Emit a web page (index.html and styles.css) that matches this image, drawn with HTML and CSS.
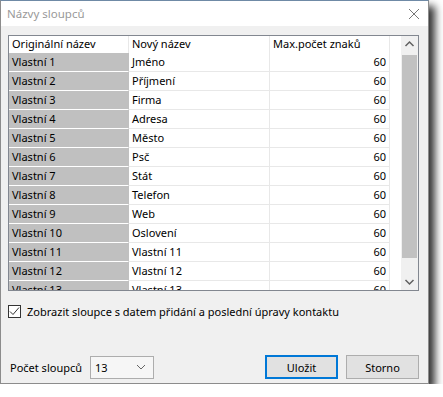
FILE: index.html
```html
<!DOCTYPE html>
<html lang="cs">
<head>
    <meta charset="UTF-8">
    <title>Názvy sloupců</title>
    <link rel="stylesheet" href="styles.css">
</head>
<body>
    <div class="okno">
        <div class="titulek">
            <span>Názvy sloupců</span>
            <svg class="zavrit" width="12" height="12" viewBox="0 0 12 12">
                <path d="M1 1 L11 11 M11 1 L1 11" stroke="#777" stroke-width="1" fill="none"/>
            </svg>
        </div>

        <div class="obsah">
            <div class="mrizka">
                <div class="tabulka">
                    <div class="radek hlavicka">
                        <div class="bunka c1">Originální název</div>
                        <div class="bunka c2">Nový název</div>
                        <div class="bunka c3">Max.počet znaků</div>
                        <div class="bunka c4"></div>
                    </div>
                    <div class="radek"><div class="bunka c1">Vlastní 1</div><div class="bunka c2">Jméno</div><div class="bunka c3 cislo">60</div><div class="bunka c4"></div></div>
                    <div class="radek"><div class="bunka c1">Vlastní 2</div><div class="bunka c2">Příjmení</div><div class="bunka c3 cislo">60</div><div class="bunka c4"></div></div>
                    <div class="radek"><div class="bunka c1">Vlastní 3</div><div class="bunka c2">Firma</div><div class="bunka c3 cislo">60</div><div class="bunka c4"></div></div>
                    <div class="radek"><div class="bunka c1">Vlastní 4</div><div class="bunka c2">Adresa</div><div class="bunka c3 cislo">60</div><div class="bunka c4"></div></div>
                    <div class="radek"><div class="bunka c1">Vlastní 5</div><div class="bunka c2">Město</div><div class="bunka c3 cislo">60</div><div class="bunka c4"></div></div>
                    <div class="radek"><div class="bunka c1">Vlastní 6</div><div class="bunka c2">Psč</div><div class="bunka c3 cislo">60</div><div class="bunka c4"></div></div>
                    <div class="radek"><div class="bunka c1">Vlastní 7</div><div class="bunka c2">Stát</div><div class="bunka c3 cislo">60</div><div class="bunka c4"></div></div>
                    <div class="radek"><div class="bunka c1">Vlastní 8</div><div class="bunka c2">Telefon</div><div class="bunka c3 cislo">60</div><div class="bunka c4"></div></div>
                    <div class="radek"><div class="bunka c1">Vlastní 9</div><div class="bunka c2">Web</div><div class="bunka c3 cislo">60</div><div class="bunka c4"></div></div>
                    <div class="radek"><div class="bunka c1">Vlastní 10</div><div class="bunka c2">Oslovení</div><div class="bunka c3 cislo">60</div><div class="bunka c4"></div></div>
                    <div class="radek"><div class="bunka c1">Vlastní 11</div><div class="bunka c2">Vlastní 11</div><div class="bunka c3 cislo">60</div><div class="bunka c4"></div></div>
                    <div class="radek"><div class="bunka c1">Vlastní 12</div><div class="bunka c2">Vlastní 12</div><div class="bunka c3 cislo">60</div><div class="bunka c4"></div></div>
                    <div class="radek"><div class="bunka c1">Vlastní 13</div><div class="bunka c2">Vlastní 13</div><div class="bunka c3 cislo">60</div><div class="bunka c4"></div></div>
                </div>
                <div class="posuvnik">
                    <svg class="sipka" width="17" height="17" viewBox="0 0 17 17">
                        <path d="M4.5 10 L8.5 6 L12.5 10" stroke="#606060" stroke-width="1.5" fill="none"/>
                    </svg>
                    <div class="jezdec"></div>
                    <svg class="sipka" width="17" height="17" viewBox="0 0 17 17">
                        <path d="M4.5 7 L8.5 11 L12.5 7" stroke="#606060" stroke-width="1.5" fill="none"/>
                    </svg>
                </div>
            </div>

            <label class="volba">
                <span class="zaskrtavatko">
                    <svg width="11" height="11" viewBox="0 0 11 11">
                        <path d="M1 5.5 L4 8.5 L10 1.5" stroke="#333" stroke-width="1" fill="none"/>
                    </svg>
                </span>
                Zobrazit sloupce s datem přidání a poslední úpravy kontaktu
            </label>

            <div class="zapati">
                <span class="popisek">Počet sloupců</span>
                <div class="vyber">
                    <span>13</span>
                    <svg width="10" height="6" viewBox="0 0 10 6">
                        <path d="M1 1 L5 5 L9 1" stroke="#666" stroke-width="1" fill="none"/>
                    </svg>
                </div>
                <div class="tlacitka">
                    <button class="tlacitko vychozi">Uložit</button>
                    <button class="tlacitko">Storno</button>
                </div>
            </div>
        </div>
    </div>
</body>
</html>
```
FILE: styles.css
```css
body {
    margin: 0;
    background-color: #fff;
    font-family: "Noto Sans", "Open Sans", sans-serif;
    font-size: 11px;
    color: #000;
}

.okno {
    width: 429px;
    height: 384px;
    box-sizing: border-box;
    border: 1px solid #8c8c8c;
    border-top-color: #6f8aa6;
    background-color: #f0f0f0;
    display: flex;
    flex-direction: column;
    box-shadow: 6px 6px 8px rgba(0, 0, 0, 0.8);
}

.titulek {
    height: 25px;
    background-color: #fff;
    display: flex;
    align-items: center;
    justify-content: space-between;
    padding: 0 8px 0 6px;
    color: #999;
    font-size: 11.5px;
}

.obsah {
    flex: 1;
    display: flex;
    flex-direction: column;
    padding: 9px 9px 4px 7px;
}

.mrizka {
    height: 256px;
    box-sizing: border-box;
    border: 1px solid #828790;
    background-color: #fff;
    display: flex;
    overflow: hidden;
}

.tabulka {
    flex: 1;
    overflow: hidden;
}

.radek {
    display: flex;
    height: 19px;
}

.hlavicka {
    height: 17px;
}

.bunka {
    box-sizing: border-box;
    height: 100%;
    line-height: 18px;
    padding: 0 3px;
    white-space: nowrap;
    overflow: hidden;
    border-right: 1px solid #e8e8e8;
    border-bottom: 1px solid #e8e8e8;
}

.hlavicka .bunka {
    line-height: 16px;
    border-bottom: none;
}

.c1 { width: 120px; }
.c2 { width: 141px; }
.c3 { width: 120px; }
.c4 { flex: 1; border-right: none; }

.radek:not(.hlavicka) .c1 {
    background-color: #c0c0c0;
    border-bottom-color: #fff;
    border-right-color: #c0c0c0;
}

.radek:not(.hlavicka) .c4 {
    border-bottom: none;
}

.cislo {
    text-align: right;
}

.posuvnik {
    width: 17px;
    background-color: #f0f0f0;
    display: flex;
    flex-direction: column;
    align-items: center;
}

.sipka {
    flex: none;
}

.jezdec {
    width: 15px;
    height: 203px;
    margin-top: 2px;
    background-color: #c1c1c1;
}

.posuvnik .sipka:last-child {
    margin-top: auto;
}

.volba {
    display: flex;
    align-items: center;
    gap: 6px;
    margin-top: 13px;
    height: 14px;
}

.zaskrtavatko {
    width: 13px;
    height: 13px;
    box-sizing: border-box;
    border: 1px solid #333;
    background-color: #fff;
    display: flex;
    align-items: center;
    justify-content: center;
}

.zapati {
    margin-top: auto;
    display: flex;
    align-items: center;
}

.popisek {
    margin-left: 2px;
    width: 80px;
}

.vyber {
    width: 64px;
    height: 23px;
    box-sizing: border-box;
    border: 1px solid #adadad;
    background-color: #f6f6f6;
    display: flex;
    align-items: center;
    justify-content: space-between;
    padding: 0 7px 0 4px;
}

.tlacitka {
    margin-left: auto;
    display: flex;
    gap: 8px;
}

.tlacitko {
    width: 73px;
    height: 24px;
    box-sizing: border-box;
    border: 1px solid #adadad;
    background-color: #e1e1e1;
    font-family: inherit;
    font-size: 11px;
    color: #000;
    padding: 0;
}

.vychozi {
    border: 2px solid #0078d7;
}
```
